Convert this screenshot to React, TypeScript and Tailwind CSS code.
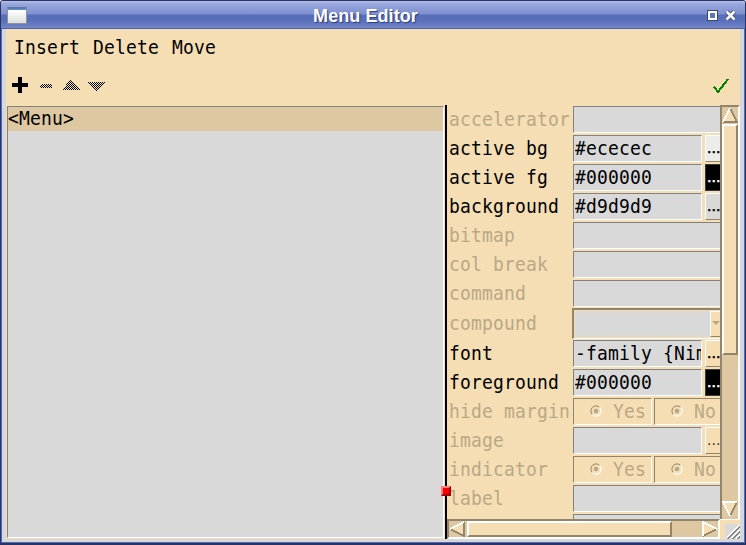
import React from "react";

const sunken = "border border-t-[#828282] border-l-[#828282] border-r-white border-b-white";
const sunkenTan = "border border-t-[#93856b] border-l-[#93856b] border-r-white border-b-white";

function T({ children }: { children: React.ReactNode }) {
  return <span className="block origin-[0_75%] scale-y-[1.06] whitespace-pre">{children}</span>;
}

function Dots({ light = false, dim = false }: { light?: boolean; dim?: boolean }) {
  return (
    <span
      className={`block whitespace-nowrap font-['Liberation_Sans',sans-serif] leading-[23px] tracking-normal ${light ? "text-white" : "text-black"} ${dim ? "pl-px text-[16px] opacity-75" : "pl-px text-[16px] [-webkit-text-stroke:0.5px_currentColor]"}`}
    >
      ...
    </span>
  );
}

function Pick({ bg, light = false, dim = false }: { bg: string; light?: boolean; dim?: boolean }) {
  const edge = light ? "border-[#3b3b3b]" : "border-t-white border-l-white border-b-[#93856b] border-r-[#93856b]";
  return (
    <div className={`ml-[3px] h-[27px] w-10 shrink-0 border ${edge}`} style={{ backgroundColor: bg }}>
      <Dots light={light} dim={dim} />
    </div>
  );
}

function Row({ label, off = false, children }: { label: string; off?: boolean; children: React.ReactNode }) {
  return (
    <div className="flex shrink-0 py-px">
      <div className={`w-[126px] shrink-0 pl-[2px] leading-[27px] ${off ? "text-[#b9a886]" : "text-black"}`}><T>{label}</T></div>
      {children}
    </div>
  );
}

function Entry({ value = "", wide = false }: { value?: string; wide?: boolean }) {
  return (
    <div className={`h-[27px] shrink-0 overflow-hidden bg-[#d9d9d9] pl-px leading-[25px] text-black ${sunken} ${wide ? "w-[190px]" : "w-[129px]"}`}>
      <T>{value}</T>
    </div>
  );
}

function Radio({ label, second = false }: { label: string; second?: boolean }) {
  return (
    <div className={`flex h-[27px] w-[79px] shrink-0 pl-[16px] text-[#b9a886] ${sunkenTan} ${second ? "ml-[2px]" : ""}`}>
      <svg width="12" height="12" viewBox="0 0 12 12" className="mt-[6px] mr-[11px] shrink-0">
        <path d="M2.4 9.6A5 5 0 0 1 9.6 2.4" fill="none" stroke="#93856b" />
        <path d="M9.6 2.4A5 5 0 0 1 2.4 9.6" fill="none" stroke="#fff" strokeWidth="1.2" />
        <circle cx="6" cy="6" r="2.3" fill="#b9a886" />
      </svg>
      <div className="leading-[25px]"><T>{label}</T></div>
    </div>
  );
}

const radios = (
  <>
    <Radio label="Yes" />
    <Radio label="No" second />
  </>
);

function Thumb({ cls }: { cls: string }) {
  return <div className={`shrink-0 border-2 border-t-white border-l-white border-r-[#93856b] border-b-[#93856b] bg-[#f5deb3] ${cls}`} />;
}

function Arrow({ dir }: { dir: "up" | "down" | "left" | "right" }) {
  const shape = {
    up: { fill: "8,1 1,15 15,15", light: "M1 15L8 1", dark: "M8 1L15 15H1" },
    down: { fill: "1,1 15,1 8,15", light: "M8 15L1 1H15", dark: "M15 1L8 15" },
    left: { fill: "1,8 15,1 15,15", light: "M1 8L15 1", dark: "M15 1V15L1 8" },
    right: { fill: "1,1 15,8 1,15", light: "M1 15V1L15 8", dark: "M15 8L1 15" },
  }[dir];
  return (
    <svg width="16" height="16" viewBox="0 0 16 16" className="shrink-0" shapeRendering="crispEdges">
      <polygon points={shape.fill} fill="#f5deb3" />
      <path d={shape.dark} fill="none" stroke="#93856b" strokeWidth="2" />
      <path d={shape.light} fill="none" stroke="#fff" strokeWidth="2" />
    </svg>
  );
}

export default function App() {
  return (
    <div className="flex h-[545px] w-[746px] flex-col overflow-hidden rounded-t-[3px] border border-b-2 border-[#2a3462] bg-[#d6d7da] font-['DejaVu_Sans_Mono',monospace] text-[18px] tracking-[0.163px]">
      <header className="flex h-[28px] shrink-0 items-center border-b border-[#4a62ae] bg-[linear-gradient(to_bottom,#b4bee8_0px,#98a6dc_3px,#7f90d0_13px,#566db8_14px,#5a70bb_20px,#7385c7_27px)]">
        <div className="mt-px ml-[6px] h-[17px] w-5 rounded-[1px] border border-[#8d939c] border-t-[#5878ac] bg-[linear-gradient(to_bottom,#4a78b0_0px,#7194bd_2px,#ffffff_2px,#dcdedb_15px)]" />
        <h1 className="mt-[2px] w-[677px] text-center font-['Liberation_Sans',sans-serif] text-[18px] leading-[28px] font-bold tracking-[0.08px] text-white [text-shadow:1px_1px_1px_#2c3d80]">Menu Editor</h1>
        <svg width="34" height="16" viewBox="0 0 34 16" className="shrink-0">
          <path d="M3 3h11v11H3z" fill="#35447f" />
          <path d="M5 5h7v7H5z" fill="#5d73bc" stroke="#fff" strokeWidth="2" />
          <path d="M22.5 4.5l8 8M30.5 4.5l-8 8" stroke="#35447f" strokeWidth="4.4" />
          <path d="M22.5 4.5l8 8M30.5 4.5l-8 8" stroke="#fff" strokeWidth="2.6" />
        </svg>
      </header>

      <div className="flex min-h-0 flex-1 flex-col border-x border-b border-[#5269b7]">
        <main className="mr-1 mb-[3px] ml-1 flex min-h-0 flex-1 flex-col bg-[#f5deb3]">
          <nav className="flex h-[38px] shrink-0 gap-[13px] pl-2 leading-[37px] text-black">
            <T>Insert</T>
            <T>Delete</T>
            <T>Move</T>
          </nav>
          <div className="flex h-[38px] shrink-0 items-center justify-between">
            <svg width="110" height="38" viewBox="6 67 110 38" shapeRendering="crispEdges">
              <defs>
                <pattern id="stipple" width="2" height="2" patternUnits="userSpaceOnUse">
                  <path d="M0 0h1v1H0zM1 1h1v1H1z" fill="#000" />
                </pattern>
              </defs>
              <path d="M18 77h4v6h6v4h-6v6h-4v-6h-6v-4h6z" fill="#000" />
              <path d="M41 84h10l1 1v2l-1 1H41l-1-1v-2z" fill="url(#stipple)" />
              <path d="M71 79.5l9 10.5H61.5z" fill="url(#stipple)" />
              <path d="M88 82h18.5l-9.5 10z" fill="url(#stipple)" />
            </svg>
            <svg width="16" height="16" viewBox="0 0 16 16" className="mr-[11px] mb-px" shapeRendering="crispEdges">
              <path d="M1 8.5l4 5.5L15 1" fill="none" stroke="#008200" strokeWidth="2.1" />
            </svg>
          </div>

          <div className="flex min-h-0 flex-1">
            <div className={`mt-px mb-px ml-px w-[437px] shrink-0 bg-[#d9d9d9] ${sunken}`}>
              <div className="h-6 bg-[#dec8a2] leading-[23px] text-black"><T>&lt;Menu&gt;</T></div>
            </div>
            <div className="relative ml-px w-[2px] shrink-0 bg-black">
              <div className="absolute top-[381px] -left-1 z-10 h-[10px] w-[10px] border-2 border-t-[#ff7f7f] border-l-[#ff7f7f] border-r-[#a00000] border-b-[#a00000] bg-[#ff0000]" />
            </div>

            <section className="flex min-w-0 flex-1 flex-col">
              <div className="flex h-[414px] shrink-0">
                <div className="flex w-[273px] shrink-0 flex-col overflow-hidden">
                  <Row label="accelerator" off><Entry wide /></Row>
                  <Row label="active bg"><Entry value="#ececec" /><Pick bg="#ececec" /></Row>
                  <Row label="active fg"><Entry value="#000000" /><Pick bg="#000000" light /></Row>
                  <Row label="background"><Entry value="#d9d9d9" /><Pick bg="#d9d9d9" /></Row>
                  <Row label="bitmap" off><Entry wide /></Row>
                  <Row label="col break" off><Entry wide /></Row>
                  <Row label="command" off><Entry wide /></Row>
                  <div className="flex h-[31px] shrink-0">
                    <div className="w-[125px] shrink-0 pl-[2px] leading-[31px] text-[#b9a886]"><T>compound</T></div>
                    <div className="flex h-[31px] w-[190px] shrink-0 border-t-2 border-r-2 border-b border-l-2 border-t-[#93856b] border-l-[#93856b] border-r-white border-b-white p-px">
                      <div className="w-[135px] shrink-0 bg-[#d9d9d9]" />
                      <div className="flex w-10 shrink-0 items-center border border-t-white border-l-white border-b-[#93856b] border-r-[#93856b] pl-px">
                        <svg width="8" height="5" viewBox="0 0 8 5" className="-mt-px"><path d="M0 0h8L4 4z" fill="#b9a886" /></svg>
                      </div>
                    </div>
                  </div>
                  <Row label="font"><Entry value="-family {Nim" /><Pick bg="#f5deb3" /></Row>
                  <Row label="foreground"><Entry value="#000000" /><Pick bg="#000000" light /></Row>
                  <Row label="hide margin" off>{radios}</Row>
                  <Row label="image" off><Entry /><Pick bg="#f5deb3" dim /></Row>
                  <Row label="indicator" off>{radios}</Row>
                  <Row label="label" off><Entry wide /></Row>
                  <Row label="" off><Entry wide /></Row>
                </div>
                <div className="flex w-5 shrink-0 flex-col border-2 border-t-[#93856b] border-l-[#93856b] border-r-white border-b-0 bg-[#dec8a2]">
                  <Arrow dir="up" />
                  <Thumb cls="mt-px h-[231px] w-4" />
                  <div className="mt-auto h-[18px]"><Arrow dir="down" /></div>
                </div>
              </div>
              <div className="flex h-5 shrink-0">
                <div className="flex w-[273px] shrink-0 border-2 border-t-[#93856b] border-l-[#93856b] border-r-white border-b-white bg-[#dec8a2]">
                  <Arrow dir="left" />
                  <Thumb cls="ml-[2px] h-4 w-[205px]" />
                  <div className="ml-auto"><Arrow dir="right" /></div>
                </div>
                <div className="flex w-5 items-end justify-end border-t border-white">
                  <svg width="15" height="15" viewBox="0 0 15 15" className="bg-[#d9d9d9]" shapeRendering="crispEdges">
                    <path d="M1 15L15 1M6 15L15 6M11 15l4-4" stroke="#fff" strokeWidth="1.5" />
                    <path d="M2.5 15L15 2.5M7.5 15L15 7.5M12.5 15l2.5-2.5" stroke="#828282" strokeWidth="2" />
                  </svg>
                </div>
              </div>
            </section>
          </div>
        </main>
      </div>
    </div>
  );
}
